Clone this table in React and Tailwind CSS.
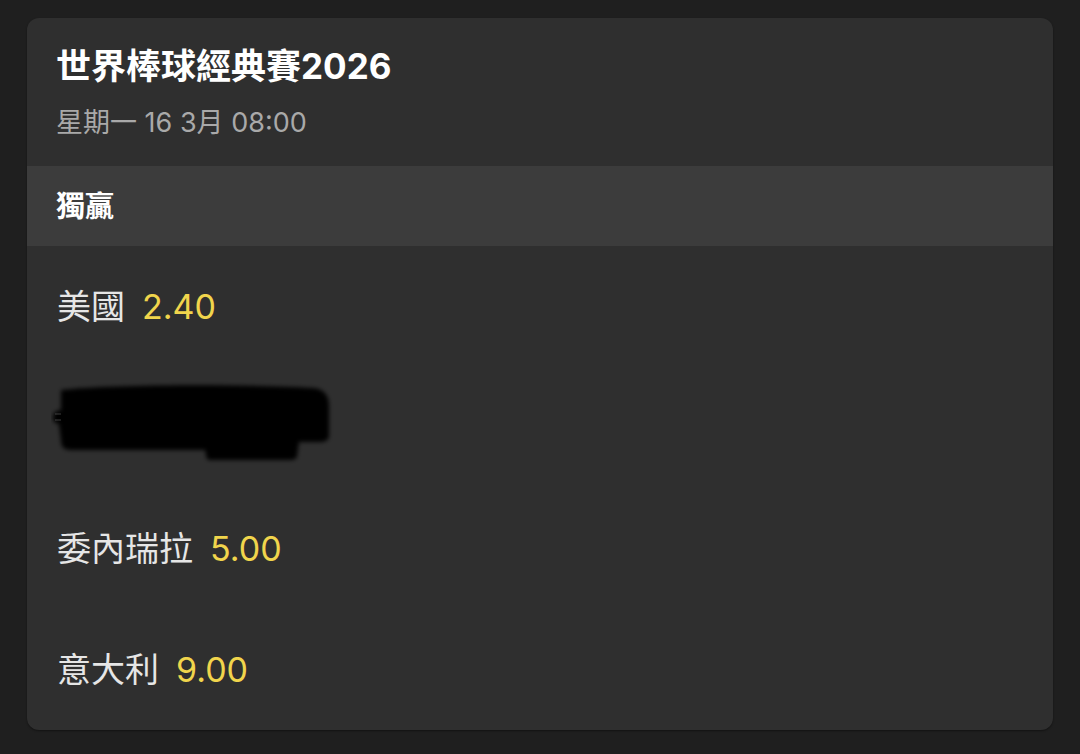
import React from 'react';

const font = { fontFamily: 'Inter, "Noto Sans CJK TC", "Noto Sans", sans-serif' };

function Redacted() {
    // scribbled-out name, drawn as a blurred black blot
    return (
        <svg width="290" height="90" viewBox="0 0 290 90" className="block">
            <defs>
                <filter id="soft" x="-10%" y="-20%" width="120%" height="140%">
                    <feGaussianBlur stdDeviation="2.2" />
                </filter>
            </defs>
            <path
                d="M10 12 C60 6 200 6 262 10 C272 11 278 16 278 28 L278 58 C278 62 274 64 268 64 L248 64 L246 78 C246 81 243 82 238 82 L160 82 C156 82 155 80 155 76 L154 72 L20 72 C12 72 10 68 10 62 L8 46 L3 44 C1 40 2 34 6 33 L10 32 Z"
                fill="#060606"
                filter="url(#soft)"
            />
            <path d="M4 36 L10 36 M4 42 L10 42" stroke="#777" strokeWidth="1" opacity="0.5" />
        </svg>
    );
}

function Row({ name, odds, children }) {
    return (
        <div className="h-[121px] flex items-center pl-[30px]">
            {children ? (
                children
            ) : (
                <div className="flex items-center gap-[17px] text-[34px] leading-none">
                    <span className="text-[#e6e6e6]">{name}</span>
                    <span className="text-[#f1d54c]">{odds}</span>
                </div>
            )}
        </div>
    );
}

export default function App() {
    return (
        <div className="min-h-[754px] bg-[#1f1f1f] pt-[18px] pb-[25px] px-[27px]" style={font}>
            <div className="bg-[#2f2f2f] rounded-[12px] overflow-hidden shadow-[0_1px_2px_rgba(0,0,0,0.4)]">
                <div className="h-[148px] pt-[28px] pl-[29px]">
                    <div className="text-[35px] leading-[40px] font-bold text-white">世界棒球經典賽2026</div>
                    <div className="mt-[20px] text-[27px] leading-[34px] text-[#a9a9a9]">星期一 16 3月 08:00</div>
                </div>
                <div className="h-[80px] bg-[#3c3c3c] flex items-center pl-[29px]">
                    <span className="text-[29px] font-bold text-white leading-none">獨贏</span>
                </div>
                <Row name="美國" odds="2.40" />
                <Row>
                    <div className="-ml-[6px] -mt-[10px]">
                        <Redacted />
                    </div>
                </Row>
                <Row name="委內瑞拉" odds="5.00" />
                <Row name="意大利" odds="9.00" />
            </div>
        </div>
    );
}
